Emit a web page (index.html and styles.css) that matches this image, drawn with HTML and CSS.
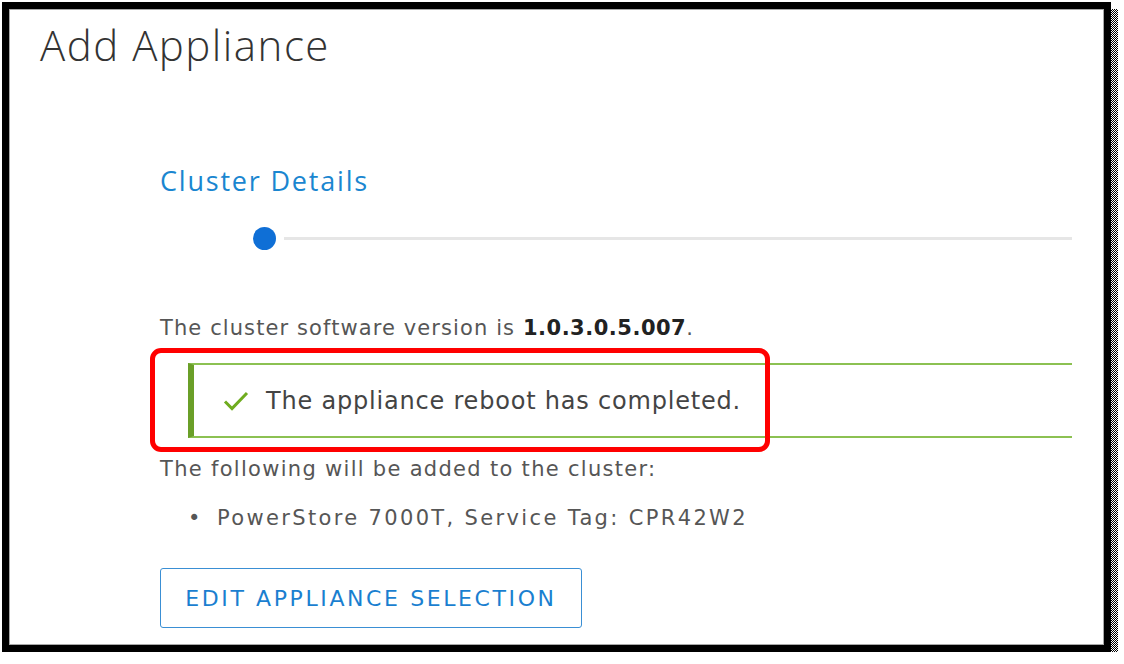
FILE: index.html
```html
<!DOCTYPE html>
<html lang="en">

<head>
    <meta charset="UTF-8">
    <meta name="viewport" content="width=device-width, initial-scale=1.0">
    <title>Add Appliance</title>
    <link rel="stylesheet" href="styles.css">
</head>

<body>
    <div class="frame">
        <div class="screen">
            <h1 class="title">Add Appliance</h1>

            <div class="wizard">
                <h2 class="step-title">Cluster Details</h2>
                <div class="progress">
                    <span class="dot"></span>
                    <span class="track"></span>
                </div>

                <p class="version">The cluster software version is <strong>1.0.3.0.5.007</strong>.</p>

                <div class="alert-wrap">
                    <div class="alert">
                        <svg class="check" width="26" height="22" viewBox="0 0 26 22">
                            <path d="M2 11.5 L9 18.5 L24 3" fill="none" stroke="#6fac1f" stroke-width="3" />
                        </svg>
                        <span>The appliance reboot has completed.</span>
                    </div>
                    <div class="callout"></div>
                </div>

                <p class="note">The following will be added to the cluster:</p>
                <ul class="items">
                    <li>PowerStore 7000T, Service Tag: CPR42W2</li>
                </ul>

                <button type="button" class="btn">Edit Appliance Selection</button>
            </div>
        </div>
    </div>
</body>

</html>
```

FILE: styles.css
```css
body {
    font-family: "DejaVu Sans", Arial, sans-serif;
    margin: 0;
    padding: 0;
    background-color: #fff;
    color: #565656;
}

.frame {
    position: relative;
    box-sizing: border-box;
    width: 1109px;
    height: 650px;
    margin: 2px 0 0 2px;
    border: 7px solid #000;
}

/* dithered drop shadow */
.frame::before {
    content: "";
    position: absolute;
    top: 0;
    left: 0;
    right: -14px;
    bottom: -14px;
    z-index: -1;
    background: repeating-conic-gradient(#000 0 25%, #fff 0 50%) 0 0 / 2px 2px;
}

.screen {
    box-sizing: border-box;
    height: 100%;
    padding: 10px 31px 0 30px;
    background-color: #fff;
    border: 1px solid #a8a8a8;
}

.title {
    margin: 0;
    font-family: "Open Sans", Arial, sans-serif;
    font-size: 42px;
    font-weight: 300;
    letter-spacing: 1.5px;
    color: #333;
    line-height: 50px;
}

.wizard {
    padding-left: 120px;
}

.step-title {
    margin: 94px 0 0;
    font-family: "Open Sans", Arial, sans-serif;
    font-size: 27px;
    font-weight: 400;
    letter-spacing: 1.8px;
    color: #1a86d0;
    line-height: 34px;
}

.progress {
    display: flex;
    align-items: center;
    margin: 28px 0 0 93px;
    height: 24px;
}

.dot {
    width: 23px;
    height: 23px;
    border-radius: 50%;
    background-color: #0f6fd6;
}

.track {
    flex: 1;
    height: 3px;
    margin-left: 8px;
    background-color: #e6e6e6;
}

.version {
    margin: 64px 0 0;
    font-size: 21px;
    letter-spacing: 1.1px;
    line-height: 28px;
}

.version strong {
    font-weight: 700;
    letter-spacing: 0.5px;
    color: #222;
}

.alert-wrap {
    position: relative;
    margin: 21px 0 0 28px;
}

.alert {
    display: flex;
    align-items: center;
    height: 71px;
    padding-left: 29px;
    border-top: 2px solid #8cc152;
    border-bottom: 2px solid #8cc152;
    border-left: 6px solid #6a9f28;
    font-size: 24px;
    letter-spacing: 0.8px;
    color: #444;
}

.check {
    margin-right: 17px;
}

/* red annotation box drawn over the alert */
.callout {
    position: absolute;
    top: -15px;
    left: -38px;
    width: 620px;
    height: 104px;
    box-sizing: border-box;
    border: 5px solid #ff0000;
    border-radius: 11px;
}

.note {
    margin: 17px 0 0;
    font-size: 21px;
    letter-spacing: 1.3px;
    line-height: 28px;
}

.items {
    margin: 21px 0 0;
    padding-left: 28px;
    list-style: none;
    font-size: 21px;
    letter-spacing: 2.35px;
    line-height: 28px;
}

.items li::before {
    content: "•";
    display: inline-block;
    width: 29px;
    letter-spacing: 0;
}

.btn {
    margin-top: 36px;
    width: 422px;
    height: 60px;
    padding: 0;
    font-family: "DejaVu Sans", Arial, sans-serif;
    font-size: 22px;
    letter-spacing: 2.6px;
    text-transform: uppercase;
    color: #1a7fd0;
    background-color: #fff;
    border: 1px solid #3a8fd4;
    border-radius: 3px;
}
```
